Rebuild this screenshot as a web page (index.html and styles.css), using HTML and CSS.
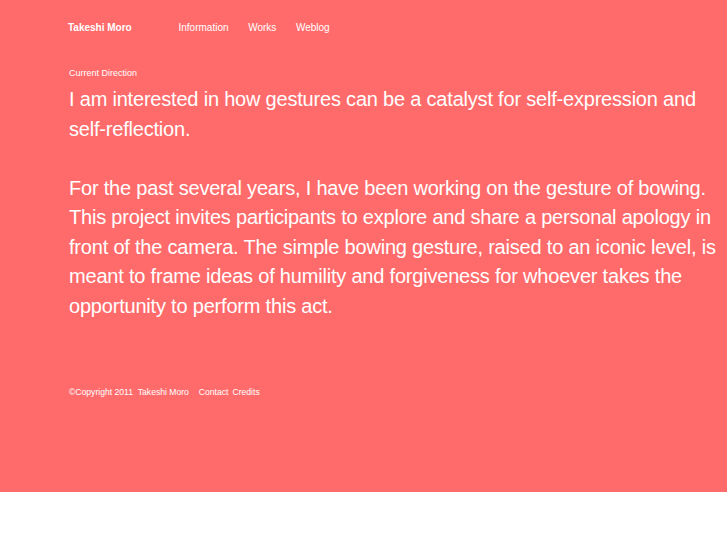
FILE: index.html
```html
<!DOCTYPE html>
<html>
<head>
<meta charset="utf-8">
<link rel="stylesheet" href="styles.css">
</head>
<body>
<div class="page">
  <header class="header">
    <a class="brand">Takeshi Moro</a>
    <nav class="nav">
      <a>Information</a>
      <a>Works</a>
      <a>Weblog</a>
    </nav>
  </header>
  <main class="main">
    <h2 class="label">Current Direction</h2>
    <p class="lead">I am interested in how gestures can be a catalyst for self-expression and self-reflection.</p>
    <p class="lead">For the past several years, I have been working on the gesture of bowing. This project invites participants to explore and share a personal apology in front of the camera. The simple bowing gesture, raised to an iconic level, is meant to frame ideas of humility and forgiveness for whoever takes the opportunity to perform this act.</p>
  </main>
  <footer class="footer">
    <span>©Copyright 2011 &nbsp;Takeshi Moro</span>
    <a class="contact">Contact</a>
    <a>Credits</a>
  </footer>
</div>
</body>
</html>
```
FILE: styles.css
```css
html, body {
  margin: 0;
  padding: 0;
  background: #ffffff;
}
body {
  font-family: "Liberation Sans", Arial, sans-serif;
  color: #ffffff;
}
.page {
  background: #ff6b6b;
  height: 492px;
  padding: 0 8px 0 69px;
  box-sizing: border-box;
}
.header {
  display: flex;
  align-items: baseline;
  padding-top: 22px;
  height: 14px;
}
.brand {
  font-weight: bold;
  font-size: 10px;
  margin-left: -1px;
  width: 110px;
}
.nav {
  display: flex;
  gap: 19.6px;
  margin-left: 0.5px;
  font-size: 10px;
}
.main {
  padding-top: 31px;
}
.label {
  font-size: 9px;
  font-weight: normal;
  margin: 0 0 6px 0;
  line-height: 12px;
}
.lead {
  font-size: 20px;
  line-height: 29.5px;
  letter-spacing: -0.2px;
  margin: 0 0 29.5px 0;
}
.footer {
  margin-top: 66px;
  font-size: 8.6px;
  display: flex;
  gap: 4px;
}
.footer .contact {
  margin-left: 6px;
}
```
